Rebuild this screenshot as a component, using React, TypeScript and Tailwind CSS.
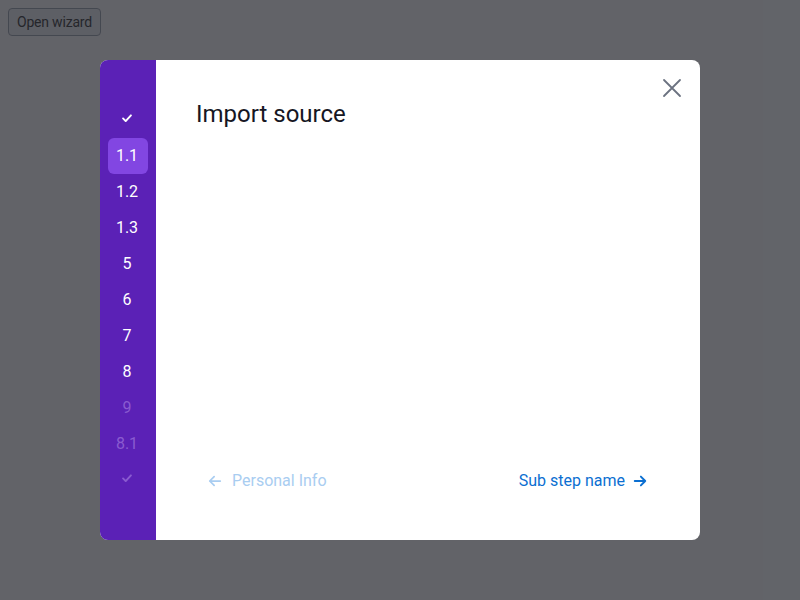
import React from "react";

const Check = ({ className }: { className?: string }) => (
  <svg viewBox="0 0 16 16" width="14" height="14" className={className} fill="none" stroke="currentColor" strokeWidth="2.2" strokeLinecap="round" strokeLinejoin="round">
    <path d="M3.5 8.5l3 3 6-6.5" />
  </svg>
);

const steps: { label: string; state: "done" | "active" | "normal" | "disabled"; icon?: boolean }[] = [
  { label: "", state: "done", icon: true },
  { label: "1.1", state: "active" },
  { label: "1.2", state: "normal" },
  { label: "1.3", state: "normal" },
  { label: "5", state: "normal" },
  { label: "6", state: "normal" },
  { label: "7", state: "normal" },
  { label: "8", state: "normal" },
  { label: "9", state: "disabled" },
  { label: "8.1", state: "disabled" },
  { label: "", state: "disabled", icon: true },
];

export default function App() {
  return (
    <div className="relative w-[800px] h-[600px] bg-white overflow-hidden" style={{ fontFamily: "Roboto, 'Liberation Sans', sans-serif" }}>
      <div className="p-2">
        <button className="h-7 px-2 rounded border border-[#9ca3af] bg-[#eef0f3] text-[14px] text-[#333] tracking-[-0.2px]">Open wizard</button>
      </div>
      <div className="absolute inset-0 bg-[#1f2128]/70 flex items-center justify-center">
        <div className="w-[600px] h-[480px] bg-white rounded-lg overflow-hidden flex">
          <div className="w-14 bg-[#5b21b6] flex flex-col items-center pt-[42px]">
            {steps.map((s, i) => (
              <div
                key={i}
                className={
                  "w-10 h-9 rounded-md flex items-center justify-center pr-[2px] text-[16px] " +
                  (s.state === "active"
                    ? "bg-[#8246e2] text-white"
                    : s.state === "disabled"
                    ? "text-[#8a5bd0]"
                    : "text-white")
                }
              >
                {s.icon ? <Check className="-mt-1" /> : s.label}
              </div>
            ))}
          </div>
          <div className="flex-1 relative flex flex-col pl-10 pr-[53px] pt-[38px] pb-[39px]">
            <button className="absolute right-[18px] top-[18px] text-[#6b7280]">
              <svg viewBox="0 0 20 20" width="20" height="20" fill="none" stroke="currentColor" strokeWidth="1.8" strokeLinecap="round">
                <path d="M2 2l16 16M18 2L2 18" />
              </svg>
            </button>
            <h1 className="text-[24px] leading-8 text-[#161623]">Import source</h1>
            <div className="flex-1" />
            <div className="flex items-center justify-between h-10 pl-3">
              <button className="flex items-center gap-2.5 text-[16px] text-[#a9cdf1]">
                <svg viewBox="0 0 16 16" width="14" height="14" fill="none" stroke="currentColor" strokeWidth="2" strokeLinecap="round" strokeLinejoin="round">
                  <path d="M14 8H2M7 3L2 8l5 5" />
                </svg>
                Personal Info
              </button>
              <button className="flex items-center gap-2 text-[16px] text-[#0b6fd1]">
                Sub step name
                <svg viewBox="0 0 16 16" width="14" height="14" fill="none" stroke="currentColor" strokeWidth="2.2" strokeLinecap="round" strokeLinejoin="round">
                  <path d="M2 8h12M9 3l5 5-5 5" />
                </svg>
              </button>
            </div>
          </div>
        </div>
      </div>
    </div>
  );
}
